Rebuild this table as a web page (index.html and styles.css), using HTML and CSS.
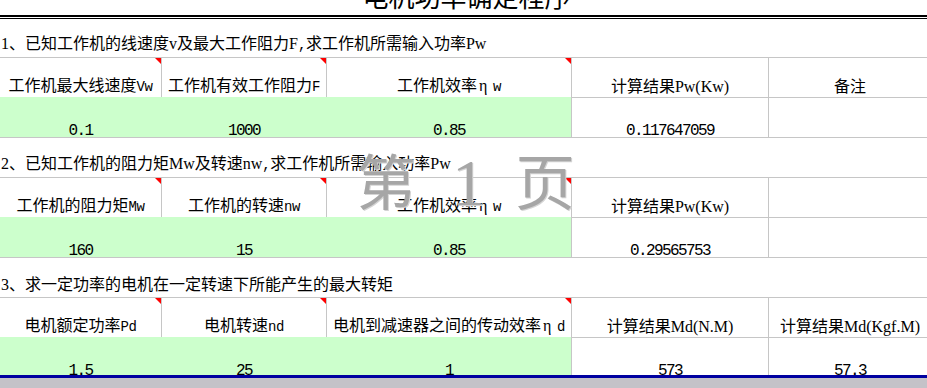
FILE: index.html
```html
<!DOCTYPE html>
<html lang="zh-CN">
<head>
<meta charset="utf-8">
<title>电机功率确定程序</title>
<link rel="stylesheet" href="styles.css">
</head>
<body>
<div class="sheet">
  <div class="title"><div class="title-text">电机功率确定程序</div></div>
  <div class="rule"></div>

  <div class="sec-title first"><span>1、已知工作机的线速度v及最大工作阻力F<span class="m">,</span>求工作机所需输入功率Pw</span></div>
  <div class="grid">
    <div class="cell hd c0"><span>工作机最大线速度<span class="m">Vw</span></span><i class="note"></i></div>
    <div class="cell hd"><span>工作机有效工作阻力<span class="m">F</span></span><i class="note"></i></div>
    <div class="cell hd"><span>工作机效率<span class="eta">η</span><span class="m">w</span></span><i class="note"></i></div>
    <div class="cell hd"><span>计算结果Pw(Kw)</span></div>
    <div class="cell hd"><span>备注</span></div>
    <div class="cell val g c0"><span>0.1</span></div>
    <div class="cell val g"><span>1000</span></div>
    <div class="cell val g"><span>0.85</span></div>
    <div class="cell val"><span>0.117647059</span></div>
    <div class="cell val"></div>
  </div>

  <div class="sec-title"><span>2、已知工作机的阻力矩Mw及转速nw<span class="m">,</span>求工作机所需输入功率Pw</span></div>
  <div class="grid">
    <div class="cell hd c0"><span>工作机的阻力矩<span class="m">Mw</span></span><i class="note"></i></div>
    <div class="cell hd"><span>工作机的转速<span class="m">nw</span></span><i class="note"></i></div>
    <div class="cell hd"><span>工作机效率<span class="eta">η</span><span class="m">w</span></span><i class="note"></i></div>
    <div class="cell hd"><span>计算结果Pw(Kw)</span></div>
    <div class="cell hd"></div>
    <div class="cell val g c0"><span>160</span></div>
    <div class="cell val g"><span>15</span></div>
    <div class="cell val g"><span>0.85</span></div>
    <div class="cell val"><span>0.29565753</span></div>
    <div class="cell val"></div>
  </div>

  <div class="sec-title"><span>3、求一定功率的电机在一定转速下所能产生的最大转矩</span></div>
  <div class="grid">
    <div class="cell hd c0"><span>电机额定功率<span class="m">Pd</span></span><i class="note"></i></div>
    <div class="cell hd"><span>电机转速<span class="m">nd</span></span><i class="note"></i></div>
    <div class="cell hd"><span>电机到减速器之间的传动效率<span class="eta">η</span><span class="m">d</span></span><i class="note"></i></div>
    <div class="cell hd"><span>计算结果Md(N.M)</span></div>
    <div class="cell hd"><span>计算结果Md(Kgf.M)</span></div>
    <div class="cell val g c0"><span>1.5</span></div>
    <div class="cell val g"><span>25</span></div>
    <div class="cell val g"><span>1</span></div>
    <div class="cell val"><span>573</span></div>
    <div class="cell val"><span>57.3</span></div>
  </div>
</div>
<div class="frame"></div>
<div class="chrome"></div>

<div class="watermark"><span>第</span><span class="wm-num">1</span><span>页</span></div>
</body>
</html>
```

FILE: styles.css
```css
html, body {
  margin: 0;
  padding: 0;
}

body {
  width: 927px;
  height: 388px;
  overflow: hidden;
  position: relative;
  background: #ffffff;
  color: #000000;
  font-family: "Liberation Serif", "Noto Sans CJK SC", serif;
  font-size: 16px;
}

.sheet {
  height: 375px;
  overflow: hidden;
}

.title {
  display: flow-root;
  height: 15px;
  border-bottom: 2px solid #000;
}

.title-text {
  margin-top: -17px;
  padding-left: 6px;
  font-family: "Noto Sans CJK SC", sans-serif;
  font-size: 26px;
  line-height: 26px;
  text-align: center;
  white-space: nowrap;
}

.rule {
  margin-top: 1px;
  border-top: 1px solid #000;
}

.sec-title {
  box-sizing: border-box;
  width: 931px;
  height: 40px;
  border-top: 1px solid #c6c6c6;
  display: flex;
  align-items: flex-end;
  padding: 0 0 3px 1px;
  line-height: 18px;
  white-space: nowrap;
}

.sec-title.first {
  height: 38px;
  border-top: 0;
}

.grid {
  display: grid;
  width: 931px;
  grid-template-columns: 161px 165px 245px 197px 163px;
  grid-auto-rows: 40px;
}

.cell {
  box-sizing: border-box;
  position: relative;
  border-top: 1px solid #c6c6c6;
  border-left: 1px solid #c6c6c6;
  display: flex;
  align-items: flex-end;
  justify-content: center;
  white-space: nowrap;
}

.cell.c0 {
  border-left: 0;
}

.hd {
  line-height: 18px;
  padding-bottom: 1px;
}

.val {
  font-family: "Liberation Mono", monospace;
  letter-spacing: -1.6px;
  line-height: 12px;
}

.g {
  background: #ccffcc;
  border-color: #ccffcc;
}

.m {
  font-family: "Liberation Mono", monospace;
  font-size: 14px;
  letter-spacing: -0.4px;
}

.eta {
  display: inline-block;
  width: 16px;
  text-align: left;
  padding-left: 2px;
  box-sizing: border-box;
}

.note {
  position: absolute;
  top: 0;
  right: 0;
  width: 0;
  height: 0;
  border-top: 6px solid #ff0000;
  border-left: 6px solid transparent;
}

.frame {
  height: 3px;
  background: #0000a0;
}

.chrome {
  height: 10px;
  background: #c4c2c8;
}

.watermark {
  position: absolute;
  left: 356px;
  top: 149px;
  display: flex;
  align-items: baseline;
  color: #a6a6a6;
  text-shadow: 1px 1px 0 #d4d4d4;
  font-family: "Noto Sans CJK SC", sans-serif;
  font-size: 60px;
  line-height: 60px;
  pointer-events: none;
}

.wm-num {
  font-family: "Liberation Serif", serif;
  font-size: 66px;
  margin: 0 30px 0 36px;
}
```
